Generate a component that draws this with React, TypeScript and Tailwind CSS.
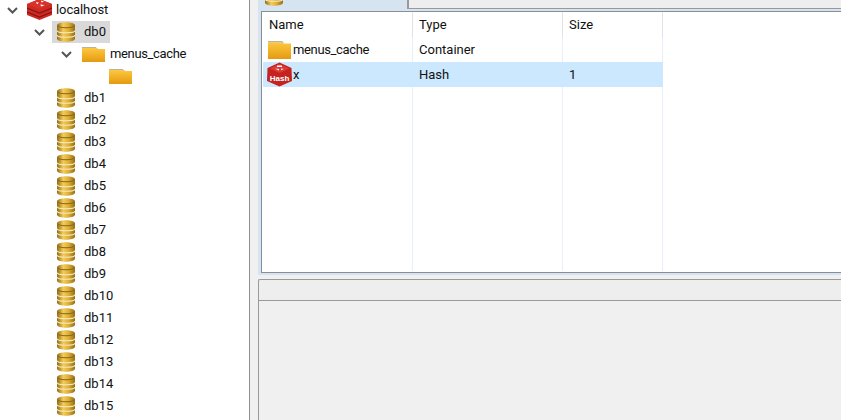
import React from 'react';

const font = "font-['Roboto','Noto_Sans',sans-serif]";

const Chevron = () => (
  <svg width="11" height="7" viewBox="0 0 11 7" fill="none" stroke="#555" strokeWidth="2">
    <path d="M1 1l4.5 4.5L10 1" />
  </svg>
);

const Database = () => (
  <svg width="18" height="20" viewBox="0 0 18 20" className="block">
    <defs>
      <linearGradient id="dbg" x1="0" x2="1" y1="0" y2="0">
        <stop offset="0" stopColor="#8f6a14" />
        <stop offset="0.35" stopColor="#f4cc5c" />
        <stop offset="0.65" stopColor="#dcae36" />
        <stop offset="1" stopColor="#946e14" />
      </linearGradient>
    </defs>
    <path d="M0 3.5C0 -0.8 18 -0.8 18 3.5V16.5C18 20.8 0 20.8 0 16.5Z" fill="url(#dbg)" />
    <path d="M0.5 3.5C0.5 6.5 17.5 6.5 17.5 3.5" fill="none" stroke="#8a6512" strokeWidth="1" />
    <path d="M0 8.5C0 11.5 18 11.5 18 8.5M0 13C0 16 18 16 18 13" fill="none" stroke="#f7e8b8" strokeWidth="1.1" />
  </svg>
);

const Folder = ({ tall }: { tall?: boolean }) => (
  <svg width="23" height={tall ? 18 : 15} viewBox="0 0 23 15" preserveAspectRatio="none" className="block">
    <defs>
      <linearGradient id="fg" x1="0" x2="0" y1="0" y2="1">
        <stop offset="0" stopColor="#fdc83f" />
        <stop offset="1" stopColor="#e59a10" />
      </linearGradient>
    </defs>
    <path d="M0 1h14l1 1h8v13H0Z" fill="url(#fg)" />
    <path d="M0 0.5h14l1.5 1.5" fill="none" stroke="#b9b4a0" strokeWidth="1" />
  </svg>
);

const RedisLogo = () => (
  <svg width="25" height="21" viewBox="0 0 25 21" className="block">
    <path d="M0 5L12.5 0 25 5v11l-12.5 5L0 16Z" fill="#cc2a22" />
    <path d="M0 9l12.5 5L25 9M0 13l12.5 5L25 13" fill="none" stroke="#8a1412" strokeWidth="1.2" />
    <path d="M0 5L12.5 0 25 5l-12.5 5Z" fill="#d9322a" />
    <path d="M9 3l3 .8-2 1.4ZM14 1.5l3 1-2.5 1ZM13 5.5l4.5 .5-3 1.5Z" fill="#fff" />
  </svg>
);

const HashIcon = () => (
  <svg width="25" height="25" viewBox="0 0 25 25" className="block">
    <path d="M0.5 6L12.5 0.5 24.5 6 25 19l-12.5 5.5L0 19Z" fill="#c4231f" />
    <path d="M2.5 6.5l10-4.5 10 4.5-10 4.5Z" fill="#dc3a33" />
    <path d="M10 3.5h5v1.5h-5ZM8 6.5l4 .5v1.5ZM14 6.5l3 .5-3 1Z" fill="#fff" />
    <text x="12.5" y="19" textAnchor="middle" fontSize="8" fontWeight="700" fill="#fff" fontFamily="Liberation Sans, sans-serif">
      Hash
    </text>
  </svg>
);

const TreeRow = ({ db }: { db: string }) => (
  <div className="flex h-[22px] items-center pl-[57px]">
    <Database />
    <span className="ml-[9px] text-[13px] text-[#111]">{db}</span>
  </div>
);

const dbs = ['db1', 'db2', 'db3', 'db4', 'db5', 'db6', 'db7', 'db8', 'db9', 'db10', 'db11', 'db12', 'db13', 'db14', 'db15'];

export default function App() {
  return (
    <div className={`flex h-[420px] w-[841px] overflow-hidden bg-[#f0f0f0] ${font}`}>
      {/* tree */}
      <div className="w-[250px] shrink-0 overflow-hidden border-r border-[#8f8f94] bg-white">
        <div className="flex h-[21px] items-center pl-[7px]">
          <Chevron />
          <span className="ml-[9px] -mt-[2px]"><RedisLogo /></span>
          <span className="ml-[4px] -mt-[2px] text-[13px] tracking-[-0.1px] text-[#111]">localhost</span>
        </div>
        <div className="flex h-[22px] items-center pl-[34px]">
          <Chevron />
          <div className="ml-[7px] flex h-[22px] w-[58px] items-center bg-[#d9d9d9] pl-[5px]">
            <Database />
            <span className="ml-[9px] text-[13px] text-[#111]">db0</span>
          </div>
        </div>
        <div className="flex h-[22px] items-center pl-[61px]">
          <Chevron />
          <span className="ml-[10px]"><Folder /></span>
          <span className="ml-[5px] text-[13px] tracking-[-0.35px] text-[#111]">menus_cache</span>
        </div>
        <div className="flex h-[22px] items-center pl-[109px]">
          <Folder />
        </div>
        {dbs.map((d) => (
          <TreeRow key={d} db={d} />
        ))}
      </div>

      {/* right side */}
      <div className="flex min-w-0 flex-1 flex-col pl-[8px]">
        <div className="relative h-[9px] shrink-0 border-b border-[#9a9a9a] bg-[#eeeeee]">
          <div className="absolute left-0 top-0 h-[9px] w-[151px] overflow-hidden border-r-2 border-[#9a9a9a] bg-[#d6e4f2] pl-[7px]">
            <div className="-mt-[14px]"><Database /></div>
          </div>
        </div>
        <div className="h-[266px] shrink-0 border-b-2 border-l-[3px] border-t-2 border-[#d6e4f2]">
          <div className="h-full border-b border-l border-t border-[#8a8f96] bg-white">
            <div className="relative h-full">
              <div className="absolute bottom-[1px] left-[150px] top-0 w-px bg-[#e6effa]" />
              <div className="absolute bottom-[1px] left-[300px] top-0 w-px bg-[#e6effa]" />
              <div className="absolute bottom-[1px] left-[400px] top-0 w-px bg-[#e6effa]" />
              <div className="absolute left-[150px] top-[1px] h-[24px] w-px bg-[#e2e2e2]" />
              <div className="absolute left-[300px] top-[1px] h-[24px] w-px bg-[#e2e2e2]" />
              <div className="absolute left-[400px] top-[1px] h-[24px] w-px bg-[#e2e2e2]" />
              <div className="relative flex h-[25px] w-[400px] items-center text-[13px] text-[#111]">
                <span className="w-[150px] pl-[7px]">Name</span>
                <span className="w-[150px] pl-[7px]">Type</span>
                <span className="pl-[7px]">Size</span>
              </div>
              <div className="relative flex h-[25px] w-[400px] items-center text-[13px] text-[#111]">
                <span className="flex w-[150px] items-center pl-[6px]"><Folder tall /><span className="ml-[2px] tracking-[-0.35px]">menus_cache</span></span>
                <span className="w-[150px] pl-[7px]">Container</span>
              </div>
              <div className="relative ml-px flex h-[25px] w-[400px] items-center bg-[#cce8ff] text-[13px] text-[#111]">
                <span className="flex w-[149px] items-center pl-[4px]"><HashIcon /><span className="ml-px">x</span></span>
                <span className="w-[150px] pl-[7px]">Hash</span>
                <span className="pl-[7px]">1</span>
              </div>
            </div>
          </div>
        </div>
        <div className="mt-[4px] h-[22px] shrink-0 rounded-tl-[2px] border-b border-l border-t border-[#9a9a9a] bg-[#eeeeee]" />
        <div className="flex-1 border-l border-[#9a9a9a] bg-[#f0f0f0]" />
      </div>
    </div>
  );
}
